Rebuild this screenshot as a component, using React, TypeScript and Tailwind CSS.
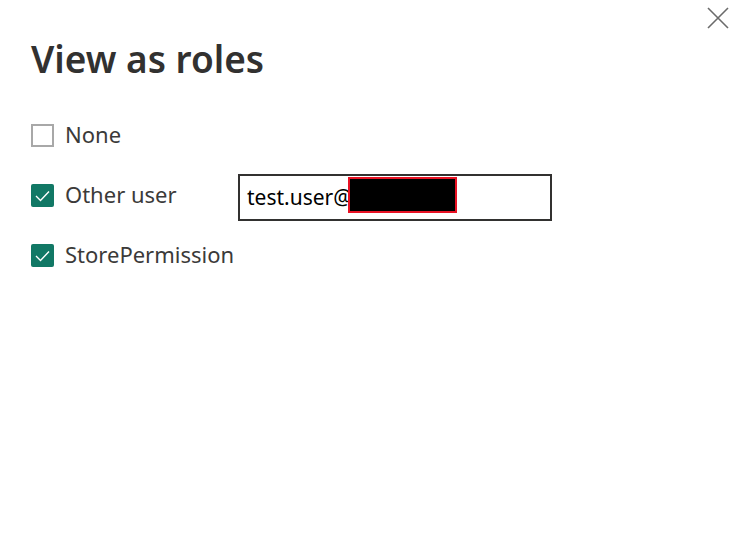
import { useState } from 'react';

type RoleRowProps = {
  label: string;
  checked: boolean;
  onToggle: () => void;
  children?: React.ReactNode;
};

function RoleRow({ label, checked, onToggle, children }: RoleRowProps) {
  return (
    <div className="flex h-[60px] items-start">
      <button
        onClick={onToggle}
        className="flex w-[207px] items-center gap-[11px] pt-[13px] text-left"
      >
        <span
          className={
            checked
              ? 'flex h-[23px] w-[23px] items-center justify-center rounded-[2px] bg-[#117865]'
              : 'flex h-[23px] w-[23px] items-center justify-center border-2 border-[#a8a8a8]'
          }
        >
          {checked && (
            <svg width="23" height="23" viewBox="0 0 23 23" fill="none">
              <path d="M5 12 L9.5 16.5 L18 7.5" stroke="white" strokeWidth="1.4" />
            </svg>
          )}
        </span>
        <span className="-mt-[4px] text-[22px] leading-[22px] text-[#3b3a39] whitespace-nowrap">{label}</span>
      </button>
      {children}
    </div>
  );
}

export default function App() {
  const [none, setNone] = useState(false);
  const [otherUser, setOtherUser] = useState(true);
  const [store, setStore] = useState(true);

  return (
    <div
      className="relative h-[546px] w-[736px] bg-white"
      style={{ fontFamily: '"Noto Sans", "Open Sans", sans-serif' }}
    >
      <button className="absolute right-[7px] top-[7px] p-0" aria-label="Close">
        <svg width="22" height="22" viewBox="0 0 22 22" fill="none">
          <path d="M1 1 L21 21 M21 1 L1 21" stroke="#6b6b6b" strokeWidth="1.6" />
        </svg>
      </button>

      <div className="px-[31px] pt-[34px]">
        <h1 className="text-[37px] font-semibold leading-[50px] text-[#323130]">View as roles</h1>

        <div className="mt-[27px] flex flex-col">
          <RoleRow label="None" checked={none} onToggle={() => setNone(!none)} />
          <RoleRow label="Other user" checked={otherUser} onToggle={() => setOtherUser(!otherUser)}>
            <div className="mt-[3px] flex h-[47px] w-[314px] border-2 border-[#323130] pl-[7px]">
              <span className="self-center text-[21px] text-black">test.user@</span>
              <span className="-ml-[4px] mt-[1px] h-[36px] w-[109px] border-2 border-[#e81123] bg-black" />
            </div>
          </RoleRow>
          <RoleRow label="StorePermission" checked={store} onToggle={() => setStore(!store)} />
        </div>
      </div>
    </div>
  );
}
